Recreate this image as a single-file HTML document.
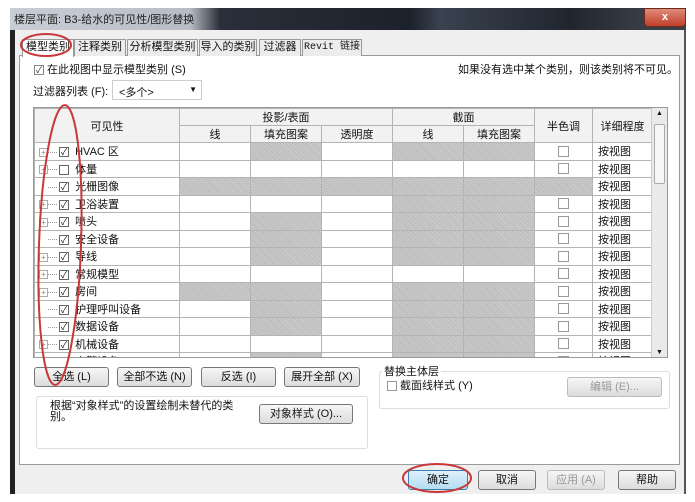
<!DOCTYPE html>
<html><head><meta charset="utf-8"><style>
*{margin:0;padding:0;box-sizing:border-box}
body{width:695px;height:502px;background:#fff;position:relative;overflow:hidden;font-family:"Liberation Sans","Noto Sans CJK SC",sans-serif;font-size:11px;color:#111}
.a{position:absolute}
.title{left:10px;top:8px;width:676px;height:24px;background:linear-gradient(90deg,#c9ced6 0,#b8bcc4 180px,#2a2f3a 210px,#1c212b 400px,#3a4250 430px,#20252e 560px,#3b3f48 640px);}
.dlg{left:10px;top:30px;width:676px;height:464px;background:#efefef;border-left:5px solid #222;border-right:2px solid #555;}
.panel{left:19px;top:55px;width:661px;height:410px;background:#fff;border:1px solid #9a9a9a}
.tab{top:39px;height:17px;border:1px solid #999;border-bottom:none;background:#ececec;font-size:11px;text-align:center;line-height:15px}
.btn{height:20px;border:1px solid #777;border-radius:3px;background:linear-gradient(#f6f6f6,#dcdcdc);text-align:center;line-height:18px;font-size:11px}
table{border-collapse:collapse;table-layout:fixed}
td{border:1px solid #b4b4b4;height:17.5px;padding:0;font-size:11px;overflow:hidden;white-space:nowrap}
.h{background:#c6c6c6;background-image:repeating-linear-gradient(45deg,#b8b8b8 0 1px,#d0d0d0 1px 2px)}
th{border:1px solid #b4b4b4;background:#f2f2f2;font-weight:normal;font-size:11px;height:17px}
.cb{display:inline-block;width:10px;height:10px;border:1px solid #666;background:#fff;vertical-align:middle;font-size:9px;line-height:8px;text-align:center}
.sq{display:inline-block;width:11px;height:11px;border:1px solid #999;background:#fff;vertical-align:middle}
.ex{display:inline-block;width:9px;height:9px;border:1px solid #aaa;vertical-align:middle;font-size:8px;line-height:7px;text-align:center;color:#888;margin-left:4px}
.dots{display:inline-block;width:9px;border-top:1px dotted #999;vertical-align:middle;margin-right:2px}
</style></head><body>
<div class="a title"></div>
<div class="a" style="left:14px;top:11px;font-size:11px;color:#222">楼层平面: B3-给水的可见性/图形替换</div>
<div class="a" style="left:644px;top:8px;width:42px;height:19px;background:linear-gradient(#e08a7a,#c0402c);border:1px solid #6a2a20;border-radius:0 0 4px 4px;color:#fff;text-align:center;font-weight:bold;line-height:17px">x</div>
<div class="a dlg"></div>
<div class="a panel"></div>
<div class="a tab" style="left:22px;width:52px;background:#fff;height:18px">模型类别</div>
<div class="a tab" style="left:74px;width:52px">注释类别</div>
<div class="a tab" style="left:127px;width:71px">分析模型类别</div>
<div class="a tab" style="left:199px;width:58px">导入的类别</div>
<div class="a tab" style="left:259px;width:42px">过滤器</div>
<div class="a tab" style="left:302px;width:60px;font-family:'Liberation Mono','Noto Sans CJK SC',monospace;font-size:10px">Revit 链接</div>
<div class="a" style="left:34px;top:61px"><span class="cb" style="border-color:#888;color:#333">✓</span> 在此视图中显示模型类别 (S)</div>
<div class="a" style="left:458px;top:61px">如果没有选中某个类别，则该类别将不可见。</div>
<div class="a" style="left:33px;top:83px">过滤器列表 (F):</div>
<div class="a" style="left:112px;top:80px;width:90px;height:20px;border:1px solid #ccc;background:#fff;padding:3px 0 0 6px">&lt;多个&gt;<span style="position:absolute;right:4px;top:4px;font-size:8px">▼</span></div>
<div class="a" style="left:33px;top:107px;width:635px;height:251px;overflow:hidden;border:1px solid #999;background:#fff">
<table style="width:618px">
<colgroup><col style="width:145px"><col style="width:71px"><col style="width:71px"><col style="width:71px"><col style="width:71px"><col style="width:71px"><col style="width:58px"><col style="width:60px"></colgroup>
<tr><th rowspan="2">可见性</th><th colspan="3">投影/表面</th><th colspan="2">截面</th><th rowspan="2">半色调</th><th rowspan="2">详细程度</th></tr>
<tr><th>线</th><th>填充图案</th><th>透明度</th><th>线</th><th>填充图案</th></tr>
<tbody id="tb"></tbody>
</table>
<div class="a" style="right:0;top:0;width:16px;height:250px;background:#eaeaea;border-left:1px solid #ccc"><div class="a" style="left:2px;top:16px;width:11px;height:60px;background:#f7f7f7;border:1px solid #aaa;border-radius:2px"></div><div class="a" style="left:4px;top:2px;font-size:7px">▲</div><div class="a" style="left:4px;bottom:2px;font-size:7px">▼</div></div>
</div>
<div class="a btn" style="left:34px;top:367px;width:75px">全选 (L)</div>
<div class="a btn" style="left:117px;top:367px;width:75px">全部不选 (N)</div>
<div class="a btn" style="left:201px;top:367px;width:75px">反选 (I)</div>
<div class="a btn" style="left:284px;top:367px;width:76px">展开全部 (X)</div>
<div class="a" style="left:379px;top:371px;width:291px;height:38px;border:1px solid #ddd;border-radius:3px"></div>
<div class="a" style="left:382px;top:363px;background:#fff;padding:0 2px">替换主体层</div>
<div class="a" style="left:387px;top:377px"><span class="sq" style="width:10px;height:10px"></span> 截面线样式 (Y)</div>
<div class="a btn" style="left:567px;top:377px;width:95px;color:#999;border-color:#bbb">编辑 (E)...</div>
<div class="a" style="left:36px;top:396px;width:332px;height:53px;border:1px solid #ddd;border-radius:3px"></div>
<div class="a" style="left:50px;top:401px;line-height:11px;width:200px">根据“对象样式”的设置绘制未替代的类别。</div>
<div class="a btn" style="left:259px;top:404px;width:94px">对象样式 (O)...</div>
<div class="a btn" style="left:408px;top:470px;width:60px;background:linear-gradient(#dff1fb,#b5dcf2);border-color:#3c7fb1">确定</div>
<div class="a btn" style="left:478px;top:470px;width:58px">取消</div>
<div class="a btn" style="left:547px;top:470px;width:58px;color:#999;border-color:#bbb">应用 (A)</div>
<div class="a btn" style="left:618px;top:470px;width:58px">帮助</div>
<svg class="a" style="left:0;top:0" width="695" height="502"><g fill="none" stroke="#c8383a" stroke-width="2"><ellipse cx="46" cy="45" rx="25" ry="11"/><ellipse cx="60" cy="245" rx="21" ry="140" transform="rotate(2 60 245)"/><ellipse cx="437" cy="478" rx="34" ry="14"/></g></svg>
<script>
var rows=[["HVAC 区",1,1,"_H_HH_"],["体量",1,0,"______"],["光栅图像",0,1,"HHHHHH"],["卫浴装置",1,1,"___HH_"],["喷头",1,1,"_H_HH_"],["安全设备",0,1,"_H_HH_"],["导线",1,1,"_H_HH_"],["常规模型",1,1,"______"],["房间",1,1,"HH_HH_"],["护理呼叫设备",0,1,"_H_HH_"],["数据设备",0,1,"_H_HH_"],["机械设备",1,1,"___HH_"],["火警设备",0,1,"_H_HH_"]];
var h="";rows.forEach(function(r){h+="<tr><td>"+(r[1]?'<span class="ex">+</span>':'<span style="display:inline-block;width:13px"></span>')+'<span class="dots"></span><span class="cb">'+(r[2]?"✓":"")+"</span>&nbsp; "+r[0]+"</td>";for(var i=0;i<6;i++){var H=r[3][i]=="H";h+="<td"+(H?' class="h"':'')+' style="text-align:center">'+(i==5&&!H?'<span class="sq"></span>':'')+"</td>";}h+='<td style="padding-left:5px">按视图</td></tr>';});
document.getElementById("tb").innerHTML=h;
</script>
</body></html>
